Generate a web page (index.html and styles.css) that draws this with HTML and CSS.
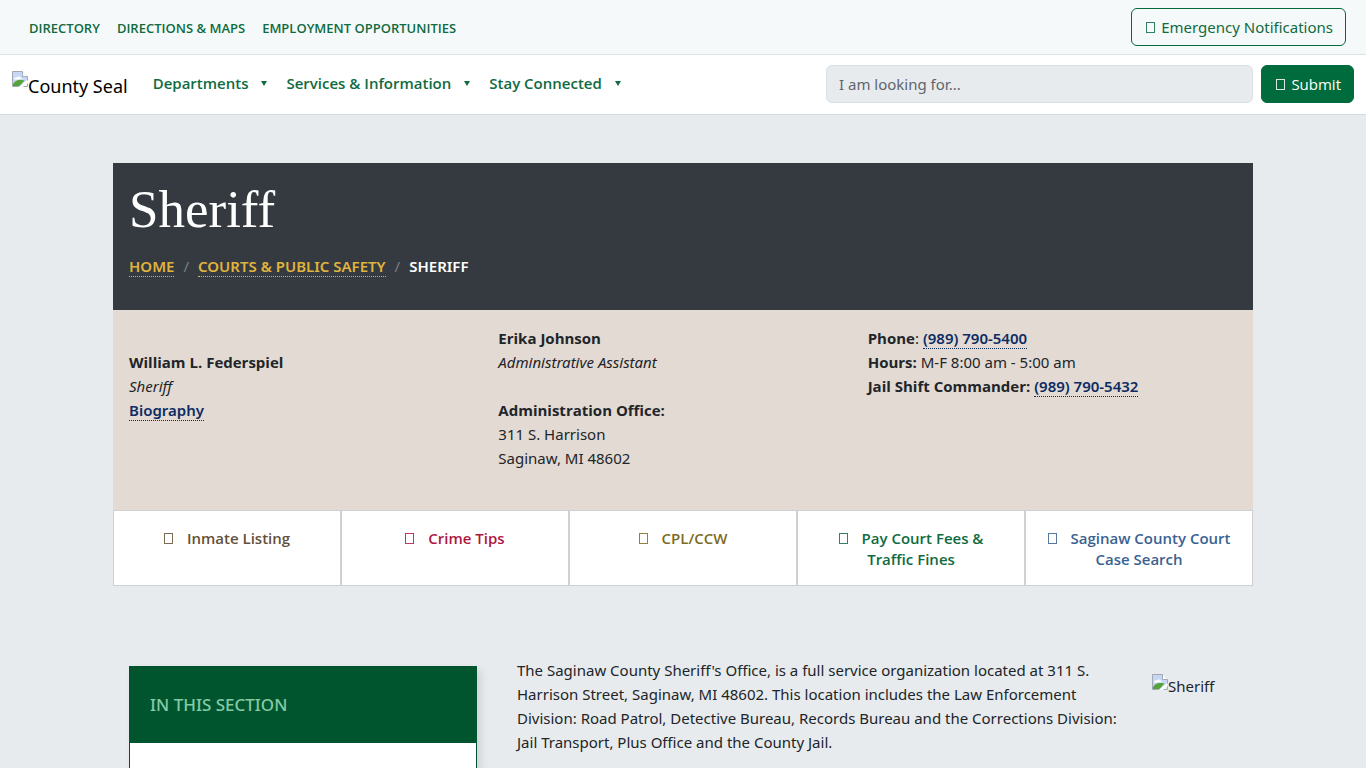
FILE: index.html
```html
<!DOCTYPE html>
<html lang="en">
<head>
<meta charset="utf-8">
<meta name="viewport" content="width=device-width, initial-scale=1">
<title>Sheriff</title>
<link rel="stylesheet" href="styles.css">
</head>
<body>
<svg width="0" height="0" class="defs" aria-hidden="true">
  <symbol id="missing-picture" viewBox="0 0 16 16">
    <path d="M.5.5h10.2l4.8 4.8v4.2L9.5 15.5H.5z" fill="#c6d8f6"/>
    <path d="M2 8.5c0-2 2-2.8 3-2 1-1.800 4-1.200 4 1 1 0 1.500.5 1.500 1z" fill="#fff"/>
    <path d="M1 15.500V13c3-5 8-5 11.500-3.500L7 15.500z" fill="#56a33e"/>
    <path d="M10.500.5v5h5z" fill="#fff"/>
    <path d="M15.500 9.500v-4h-5v-5H.5v15h6M9.500 15.500h6v-3" fill="none" stroke="#a3a8b5"/>
    <path d="M7 16l8-7v3l-4 4z" fill="#fff"/>
  </symbol>
</svg>
<header>
  <div class="topbar">
    <nav class="quick" aria-label="Quick links">
      <a href="#">Directory</a>
      <a href="#">Directions &amp; Maps</a>
      <a href="#">Employment Opportunities</a>
    </nav>
    <a class="btn btn-outline" href="#"><span class="glyph"></span>Emergency Notifications</a>
  </div>
  <div class="navbar">
    <a class="brand" href="#"><svg class="pic"><use href="#missing-picture"/></svg><span>County Seal</span></a>
    <nav class="menu" aria-label="Main">
      <button type="button">Departments<span class="caret"></span></button>
      <button type="button">Services &amp; Information<span class="caret"></span></button>
      <button type="button">Stay Connected<span class="caret"></span></button>
    </nav>
    <form class="search">
      <input type="search" aria-label="Search" placeholder="I am looking for...">
      <button class="btn btn-solid" type="submit"><span class="glyph"></span>Submit</button>
    </form>
  </div>
</header>
<main class="container">
  <section class="hero">
    <h1>Sheriff</h1>
    <nav class="crumbs" aria-label="Breadcrumb">
      <a href="#">Home</a><i>/</i><a href="#">Courts &amp; Public Safety</a><i>/</i><span>Sheriff</span>
    </nav>
  </section>
  <section class="info">
    <p class="person"><strong>William L. Federspiel</strong><br><em>Sheriff</em><br><a href="#">Biography</a></p>
    <div>
      <p><strong>Erika Johnson</strong><br><em>Administrative Assistant</em></p>
      <p class="office"><strong>Administration Office:</strong><br>311 S. Harrison<br>Saginaw, MI 48602</p>
    </div>
    <p><strong>Phone</strong>: <a href="#">(989) 790-5400</a><br><strong>Hours:</strong> M-F 8:00 am - 5:00 am<br><strong>Jail Shift Commander:</strong> <a href="#">(989) 790-5432</a></p>
  </section>
  <nav class="actions" aria-label="Sheriff services">
    <a class="brown" href="#"><span class="glyph"></span>Inmate Listing</a>
    <a class="red" href="#"><span class="glyph"></span>Crime Tips</a>
    <a class="olive" href="#"><span class="glyph"></span>CPL/CCW</a>
    <a class="green" href="#"><span class="glyph"></span>Pay Court Fees &amp; Traffic Fines</a>
    <a class="blue" href="#"><span class="glyph"></span>Saginaw County Court Case Search</a>
  </nav>
  <div class="content">
    <aside class="section-nav"><h2>In this section</h2></aside>
    <p class="intro">The Saginaw County Sheriff's Office, is a full service organization located at 311 S. Harrison Street, Saginaw, MI 48602. This location includes the Law Enforcement Division: Road Patrol, Detective Bureau, Records Bureau and the Corrections Division: Jail Transport, Plus Office and the County Jail.</p>
    <div class="portrait"><svg class="pic"><use href="#missing-picture"/></svg><span>Sheriff</span></div>
  </div>
</main>
</body>
</html>
```
FILE: styles.css
```css
* { box-sizing: border-box; }
body {
  margin: 0;
  min-height: 100vh;
  display: flex;
  flex-direction: column;
  background: #e7ebee;
  color: #212529;
  font: 15px/24px "Noto Sans", "Open Sans", sans-serif;
}
h1, h2, p { margin: 0; }
a { text-decoration: none; }
button, input { font: inherit; }
.defs { position: absolute; }

.topbar {
  display: flex;
  align-items: center;
  justify-content: space-between;
  padding: 8px 20px 8px 29px;
  background: #f6f9fa;
  border-bottom: 1px solid #dee2e6;
}
.quick { display: flex; gap: 17px; padding-top: 2px; }
.quick a {
  color: #0f6b41;
  font-family: "Open Sans", sans-serif;
  font-size: 13px;
  font-weight: 600;
  text-transform: uppercase;
}
.btn {
  display: inline-flex;
  align-items: center;
  gap: 6px;
  padding: 6px 12px 6px 14px;
  border: 1px solid #006b3c;
  border-radius: 6px;
  white-space: nowrap;
}
.btn-outline { color: #0f6b41; }
.btn-solid { background: #006b3c; color: #fff; font-family: "Open Sans", sans-serif; font-weight: 500; }
.glyph {
  display: inline-block;
  width: 9px;
  height: 11px;
  border: 1px solid;
  opacity: .85;
}

.navbar {
  display: flex;
  align-items: center;
  padding: 10px 12px 11px;
  background: #fff;
  border-bottom: 1px solid #d5dade;
}
.brand {
  display: flex;
  align-items: flex-start;
  padding-top: 4px;
  color: #000;
  font-size: 18px;
  line-height: 30px;
}
.pic { width: 16px; height: 16px; flex: none; }
.menu { display: flex; gap: 19px; padding: 0 0 2px 25px; }
.menu button {
  display: flex;
  align-items: center;
  gap: 13px;
  padding: 0;
  border: 0;
  background: none;
  color: #0f6b41;
  font-family: "Open Sans", sans-serif;
  font-weight: 600;
  white-space: nowrap;
}
.caret {
  border: 3px solid transparent;
  border-top: 5px solid;
  border-bottom: 0;
}
.search { display: flex; gap: 8px; width: 528px; margin-left: auto; }
.search input {
  flex: 1;
  min-width: 0;
  padding: 6px 12px;
  border: 1px solid #dbe0e4;
  border-radius: 6px;
  background: #e7ebee;
}
.search input::placeholder { color: #5f656b; opacity: 1; }

.container {
  flex: 1;
  display: flex;
  flex-direction: column;
  width: 100%;
  max-width: 1140px;
  margin: 48px auto 0;
}
.hero { padding: 16px 16px 32px; background: #343a40; color: #fff; }
.hero h1 {
  font: 400 53px/60px "Liberation Serif", serif;
}
.crumbs {
  display: flex;
  gap: 9px;
  margin-top: 15px;
  font-weight: 600;
  text-transform: uppercase;
}
.crumbs i { color: #7b8086; font-style: normal; font-weight: 400; }
.crumbs a { height: 23px; border-bottom: 1px dotted; color: #e0b43c; }

.info {
  display: grid;
  grid-template-columns: repeat(3, 1fr);
  padding: 16px 16px 40px;
  background: #e3dad3;
}
.info a { color: #0d2c63; font-weight: 600; border-bottom: 1px dotted; }
.info strong { font-family: "Open Sans", sans-serif; }
.person { padding-top: 24px; }
.office { margin-top: 24px; }

.actions { display: grid; grid-template-columns: repeat(5, 1fr); }
.actions a {
  padding: 17px 18px 15px;
  border: 1px solid #ced0d3;
  background: #fff;
  font-family: "Open Sans", sans-serif;
  font-weight: 600;
  line-height: 21px;
  text-align: center;
}
.actions .glyph { margin-right: 14px; }
.actions .brown { color: #65503a; }
.actions .red { color: #b0173f; }
.actions .olive { color: #7d6b1e; }
.actions .green { color: #0f6b41; }
.actions .blue { color: #3a6291; }

.content {
  flex: 1;
  display: grid;
  grid-template-columns: 348px 1fr 85px;
  padding: 72px 16px 0;
}
.section-nav {
  margin-top: 8px;
  min-height: 102px;
  border: 1px solid #00552f;
  border-bottom: 0;
  background: #fff;
  box-shadow: 4px 4px 8px rgba(0, 0, 0, .1);
}
.section-nav h2 {
  padding: 26px 20px;
  background: #00552f;
  color: #84cba5;
  font-size: 17px;
  font-weight: 500;
  line-height: 24px;
  text-transform: uppercase;
}
.intro { padding: 0 32px 0 40px; }
.portrait { display: flex; align-items: flex-start; padding-top: 16px; }
```
